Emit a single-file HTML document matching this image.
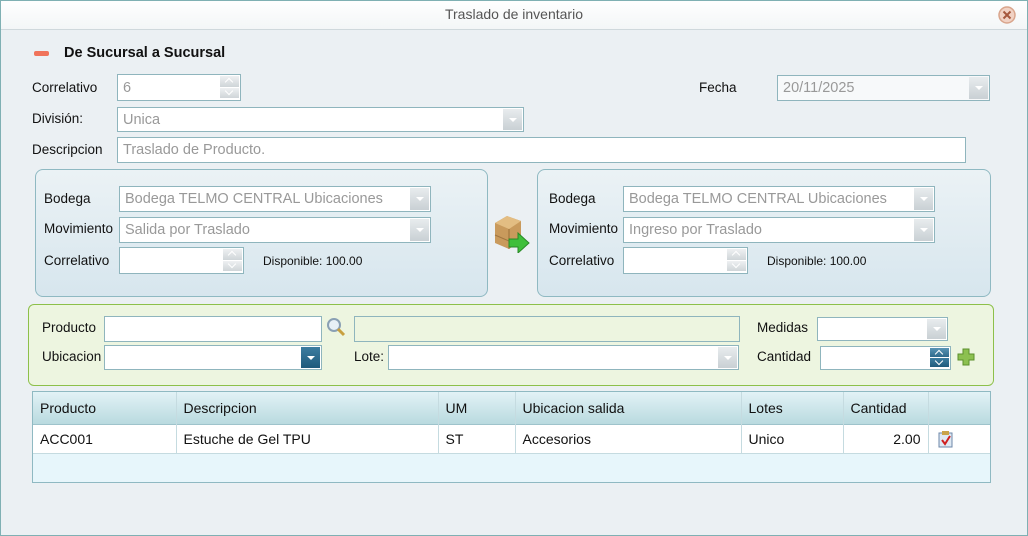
<!DOCTYPE html>
<html><head><meta charset="utf-8"><style>
*{box-sizing:border-box;margin:0;padding:0}
body{width:1028px;height:536px;overflow:hidden;font-family:"Liberation Sans",sans-serif;font-size:13.5px;color:#111;background:#ebf0f3;position:relative}
.frame{position:absolute;left:0;top:0;width:1028px;height:536px;border:1px solid #7fb0b3;z-index:9}
.title{position:absolute;left:0;top:0;width:1028px;height:30px;background:linear-gradient(#fff,#f3f6f7);border-bottom:1px solid #cfd8dc;text-align:center;line-height:29px;color:#555;font-size:14px}
.a{position:absolute}
.lbl{position:absolute;white-space:nowrap}
.in{position:absolute;background:#fff;border:1px solid #8fb5bd;color:#999;padding-left:5px;font-size:14.5px;white-space:nowrap}
.dd{position:absolute;right:1px;top:1px;bottom:1px;width:19px;background:linear-gradient(#e8ecee,#c9d0d4);}
.dd:after{content:"";position:absolute;left:6px;top:50%;margin-top:-2px;border-left:4px solid transparent;border-right:4px solid transparent;border-top:4px solid #fff}
.sp{position:absolute;right:1px;top:1px;bottom:1px;width:19px}
.sp i{display:block;position:relative;height:50%;background:linear-gradient(#eef0f2,#cfd5d8);border-bottom:1px solid #fff}
.sp i:after{content:"";position:absolute;left:6px;top:3px;width:5px;height:5px;border-left:1.5px solid #fff;border-top:1.5px solid #fff;transform:rotate(45deg)}
.sp i+i:after{top:0;transform:rotate(225deg)}
.panel{position:absolute;border:1px solid #8fb9c2;border-radius:8px;background:linear-gradient(#ebf2f5,#d7e6ee)}
th,td{font-weight:normal;text-align:left;padding-left:7px;border-right:1px solid #c5dbe0;font-size:14px}
</style></head><body>
<div class="title">Traslado de inventario</div>
<svg class="a" style="left:997px;top:6px" width="20" height="18"><circle cx="10" cy="9" r="8" fill="#f1d2c4" stroke="#d9a58c" stroke-width="1.5"/><path d="M6.5 5.5l7 7M13.5 5.5l-7 7" stroke="#a5573d" stroke-width="2"/></svg>
<div class="a" style="left:34px;top:51px;width:15px;height:5px;background:#f0735a;border-radius:2px"></div>
<div class="lbl" style="left:64px;top:45px;font-weight:bold;font-size:14.5px">De Sucursal a Sucursal</div>

<div class="lbl" style="left:32px;top:80px">Correlativo</div>
<div class="in" style="left:117px;top:74px;width:124px;height:27px;line-height:26px">6<div class="sp"><i></i><i></i></div></div>
<div class="lbl" style="left:699px;top:80px">Fecha</div>
<div class="in" style="left:777px;top:75px;width:213px;height:26px;line-height:25px;background:#f7f9fa">20/11/2025<div class="dd"></div></div>
<div class="lbl" style="left:32px;top:111px">División:</div>
<div class="in" style="left:117px;top:107px;width:407px;height:25px;line-height:25px">Unica<div class="dd"></div></div>
<div class="lbl" style="left:32px;top:142px">Descripcion</div>
<div class="in" style="left:117px;top:137px;width:849px;height:26px;line-height:25px">Traslado de Producto.</div>

<div class="panel" style="left:35px;top:169px;width:453px;height:128px"></div>
<div class="lbl" style="left:44px;top:191px">Bodega</div>
<div class="in" style="left:119px;top:186px;width:312px;height:26px;line-height:25px">Bodega TELMO CENTRAL Ubicaciones<div class="dd"></div></div>
<div class="lbl" style="left:44px;top:221px">Movimiento</div>
<div class="in" style="left:119px;top:217px;width:312px;height:26px;line-height:25px">Salida por Traslado<div class="dd"></div></div>
<div class="lbl" style="left:44px;top:253px">Correlativo</div>
<div class="in" style="left:119px;top:247px;width:125px;height:27px"><div class="sp"><i></i><i></i></div></div>
<div class="lbl" style="left:263px;top:254px;font-size:12px">Disponible: 100.00</div>

<svg class="a" style="left:492px;top:213px" width="40" height="40"><path d="M3 10l12-7 14 5v20l-12 8-14-6z" fill="#c99a5c"/><path d="M3 10l14 6 12-8-14-5z" fill="#e3bd82"/><path d="M17 16v20" stroke="#9c7038"/><path d="M3 22l14 6" stroke="#a07540"/><path d="M17 26h9v-6l11 10-11 10v-6h-9z" fill="#3fbf3a" stroke="#2a8a27"/></svg>

<div class="panel" style="left:537px;top:169px;width:454px;height:128px"></div>
<div class="lbl" style="left:549px;top:191px">Bodega</div>
<div class="in" style="left:623px;top:186px;width:312px;height:26px;line-height:25px">Bodega TELMO CENTRAL Ubicaciones<div class="dd"></div></div>
<div class="lbl" style="left:549px;top:221px">Movimiento</div>
<div class="in" style="left:623px;top:217px;width:312px;height:26px;line-height:25px">Ingreso por Traslado<div class="dd"></div></div>
<div class="lbl" style="left:549px;top:253px">Correlativo</div>
<div class="in" style="left:623px;top:247px;width:125px;height:27px"><div class="sp"><i></i><i></i></div></div>
<div class="lbl" style="left:767px;top:254px;font-size:12px">Disponible: 100.00</div>

<div class="a" style="left:28px;top:304px;width:966px;height:82px;border:1px solid #8dc04a;border-radius:6px;background:#edf5e0"></div>
<div class="lbl" style="left:42px;top:320px">Producto</div>
<div class="in" style="left:104px;top:316px;width:218px;height:26px"></div>
<svg class="a" style="left:326px;top:317px" width="22" height="22"><circle cx="8" cy="8" r="6" fill="#e8f0f6" stroke="#8aa0b4" stroke-width="2"/><path d="M12 12l6 6" stroke="#c8a040" stroke-width="3"/></svg>
<div class="in" style="left:354px;top:316px;width:386px;height:26px;background:#edf5e0"></div>
<div class="lbl" style="left:757px;top:320px">Medidas</div>
<div class="in" style="left:817px;top:317px;width:131px;height:24px"><div class="dd"></div></div>
<div class="lbl" style="left:42px;top:349px">Ubicacion</div>
<div class="in" style="left:104px;top:345px;width:218px;height:25px"><div class="dd" style="background:linear-gradient(#3d7da0,#1f5a7c)"></div></div>
<div class="lbl" style="left:354px;top:349px">Lote:</div>
<div class="in" style="left:388px;top:345px;width:351px;height:25px"><div class="dd"></div></div>
<div class="lbl" style="left:757px;top:349px">Cantidad</div>
<div class="in" style="left:820px;top:346px;width:131px;height:24px"><div class="sp"><i style="background:linear-gradient(#5a95b5,#2f6a8c)"></i><i style="background:linear-gradient(#3d7da0,#1f5a7c)"></i></div></div>
<svg class="a" style="left:956px;top:347px" width="20" height="20"><path d="M7 2h6v5h5v6h-5v5H7v-5H2V7h5z" fill="#8cc050" stroke="#5b8f2c"/></svg>

<div class="a" style="left:32px;top:391px;width:959px;height:92px;border:1px solid #8fb9c2;background:#e7f6fb">
<table style="border-collapse:collapse;width:957px">
<tr style="height:32px;background:linear-gradient(#e2f2f6,#b9dadf)"><th style="width:143px">Producto</th><th style="width:262px">Descripcion</th><th style="width:77px">UM</th><th style="width:226px">Ubicacion salida</th><th style="width:102px">Lotes</th><th style="width:85px">Cantidad</th><th style="border-right:0"></th></tr>
<tr style="height:29px;background:#fff;border-top:1px solid #9ec3cb;border-bottom:1px solid #c5dbe0"><td>ACC001</td><td>Estuche de Gel TPU</td><td>ST</td><td>Accesorios</td><td>Unico</td><td style="text-align:right;padding-right:7px">2.00</td><td style="border-right:0"><svg width="18" height="18" style="vertical-align:middle;margin-left:1px"><rect x="2" y="3" width="13" height="14" fill="#dfe9f3" stroke="#6d87a8"/><rect x="5" y="1" width="7" height="4" fill="#c9a44a"/><path d="M5 10l3 4 5-8" stroke="#d02020" stroke-width="2" fill="none"/></svg></td></tr>
</table></div>
<div class="frame"></div>
</body></html>
